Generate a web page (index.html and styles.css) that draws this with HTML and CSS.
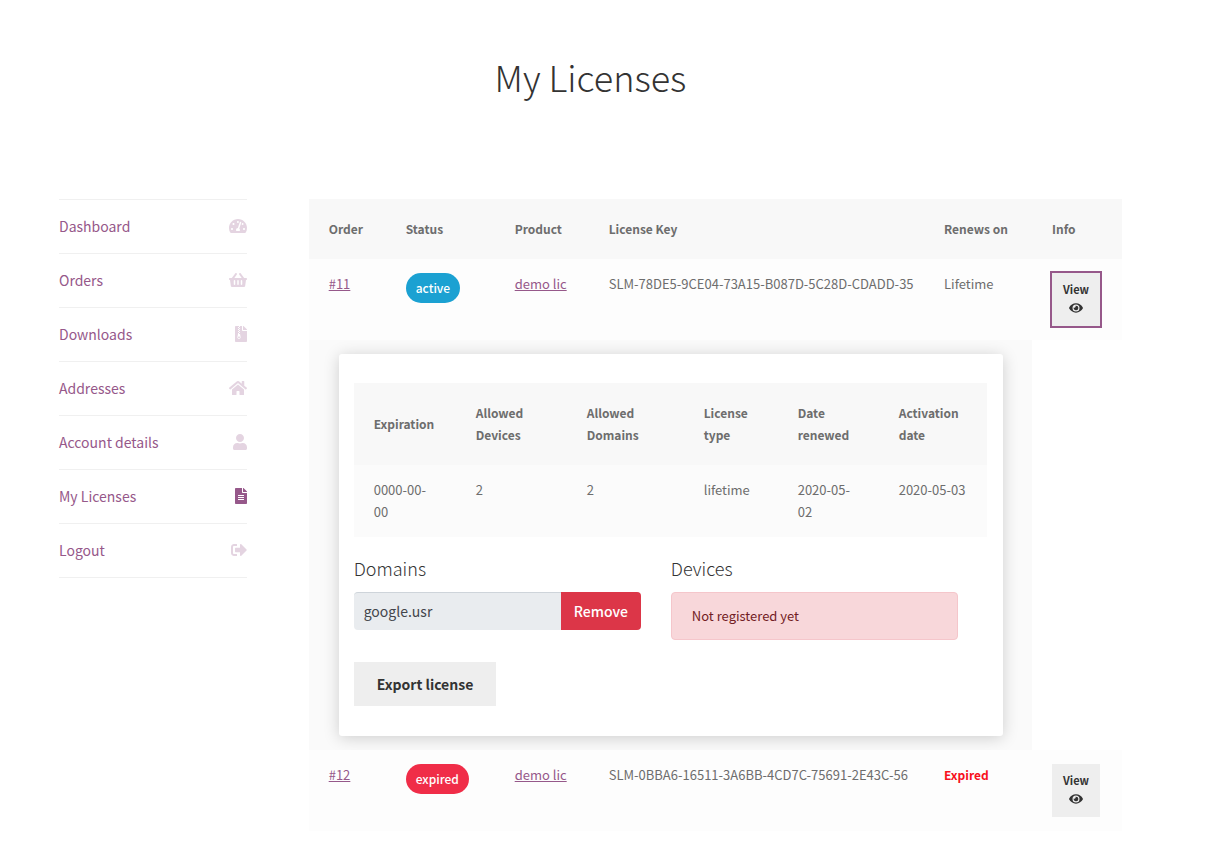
FILE: index.html
```html
<!DOCTYPE html>
<html lang="en">
<head>
<meta charset="utf-8">
<meta name="viewport" content="width=device-width, initial-scale=1">
<title>My Licenses</title>
<link rel="stylesheet" href="styles.css">
</head>
<body>
<svg class="sprite" aria-hidden="true">
  <symbol id="i-eye" viewBox="0 0 576 512"><path d="M572.52 241.4C518.29 135.59 410.93 64 288 64S57.68 135.64 3.48 241.41a32.35 32.35 0 0 0 0 29.19C57.71 376.41 165.07 448 288 448s230.32-71.64 284.52-177.41a32.35 32.35 0 0 0 0-29.19zM288 400a144 144 0 1 1 144-144 143.93 143.93 0 0 1-144 144zm0-240a95.31 95.31 0 0 0-25.31 3.79 47.85 47.85 0 0 1-66.9 66.9A95.78 95.78 0 1 0 288 160z"/></symbol>
</svg>
<div class="page">
  <header class="page-header"><h1>My Licenses</h1></header>
  <div class="layout">
    <nav class="account-nav" aria-label="Account">
      <ul>
        <li><a href="#">Dashboard <svg class="nav-icon" viewBox="0 0 576 512" aria-hidden="true"><path d="M288 32C128.94 32 0 160.94 0 320c0 52.8 14.25 102.26 39.06 144.8 5.61 9.62 16.3 15.2 27.44 15.2h443c11.14 0 21.83-5.58 27.44-15.2C561.75 422.26 576 372.8 576 320c0-159.06-128.94-288-288-288zm0 64c14.71 0 26.58 10.13 30.32 23.65-1.11 2.26-2.64 4.23-3.45 6.67l-9.22 27.67c-5.13 3.49-10.97 6.01-17.64 6.01-17.67 0-32-14.33-32-32S270.33 96 288 96zM96 384c-17.67 0-32-14.33-32-32s14.33-32 32-32 32 14.33 32 32-14.33 32-32 32zm48-160c-17.67 0-32-14.33-32-32s14.33-32 32-32 32 14.33 32 32-14.33 32-32 32zm246.77-72.41l-61.33 184C343.13 347.33 352 364.54 352 384c0 11.72-3.38 22.55-8.88 32H232.88c-5.5-9.45-8.88-20.28-8.88-32 0-33.94 26.5-61.43 59.9-63.59l61.34-184.01c4.17-12.56 17.73-19.45 30.36-15.17 12.57 4.19 19.35 17.79 15.17 30.36zm14.66 57.2l15.52-46.55c3.47-1.29 7.13-2.23 11.05-2.23 17.67 0 32 14.33 32 32s-14.33 32-32 32c-11.38-.01-20.89-6.28-26.57-15.22zM480 384c-17.67 0-32-14.33-32-32s14.33-32 32-32 32 14.33 32 32-14.33 32-32 32z"/></svg></a></li>
        <li><a href="#">Orders <svg class="nav-icon" viewBox="0 0 576 512" aria-hidden="true"><path d="M576 216v16c0 13.255-10.745 24-24 24h-8l-26.113 182.788C514.509 462.435 494.257 480 470.37 480H105.63c-23.887 0-44.139-17.565-47.518-41.212L32 256h-8c-13.255 0-24-10.745-24-24v-16c0-13.255 10.745-24 24-24h67.341l106.78-146.821c10.395-14.292 30.407-17.453 44.701-7.058 14.293 10.395 17.453 30.408 7.058 44.701L170.477 192h235.046L326.12 82.821c-10.395-14.292-7.234-34.306 7.059-44.701 14.291-10.395 34.306-7.235 44.701 7.058L484.659 192H552c13.255 0 24 10.745 24 24zM312 392V280c0-13.255-10.745-24-24-24s-24 10.745-24 24v112c0 13.255 10.745 24 24 24s24-10.745 24-24zm112 0V280c0-13.255-10.745-24-24-24s-24 10.745-24 24v112c0 13.255 10.745 24 24 24s24-10.745 24-24zm-224 0V280c0-13.255-10.745-24-24-24s-24 10.745-24 24v112c0 13.255 10.745 24 24 24s24-10.745 24-24z"/></svg></a></li>
        <li><a href="#">Downloads <svg class="nav-icon" viewBox="0 0 384 512" aria-hidden="true"><path d="M377 105L279.1 7c-4.5-4.5-10.6-7-17-7H256v128h128v-6.1c0-6.3-2.5-12.4-7-16.9zM128.4 336c-17.9 0-32.4 12.1-32.4 27 0 15 14.6 27 32.5 27s32.4-12.1 32.4-27-14.6-27-32.5-27zM224 136V0h-63.6v32h-32V0H24C10.7 0 0 10.7 0 24v464c0 13.3 10.7 24 24 24h336c13.3 0 24-10.7 24-24V160H248c-13.2 0-24-10.8-24-24zM95.9 32h32v32h-32zm32.3 384c-33.2 0-58-30.4-51.4-62.9L96.4 256v-32h32v-32h-32v-32h32v-32h-32V96h32V64h32v32h-32v32h32v32h-32v32h32v32h-32v32h22.1c5.7 0 10.7 4.1 11.8 9.7l17.3 87.7c6.4 32.4-18.4 62.6-51.4 62.6z"/></svg></a></li>
        <li><a href="#">Addresses <svg class="nav-icon" viewBox="0 0 576 512" aria-hidden="true"><path d="M280.37 148.26L96 300.11V464a16 16 0 0 0 16 16l112.06-.29a16 16 0 0 0 15.92-16V368a16 16 0 0 1 16-16h64a16 16 0 0 1 16 16v95.64a16 16 0 0 0 16 16.05L464 480a16 16 0 0 0 16-16V300L295.67 148.26a12.19 12.19 0 0 0-15.3 0zM571.6 251.47L488 182.56V44.05a12 12 0 0 0-12-12h-56a12 12 0 0 0-12 12v72.61L318.47 43a48 48 0 0 0-61 0L4.34 251.47a12 12 0 0 0-1.6 16.9l25.5 31A12 12 0 0 0 45.15 301l235.22-193.74a12.19 12.19 0 0 1 15.3 0L530.9 301a12 12 0 0 0 16.9-1.6l25.5-31a12 12 0 0 0-1.7-16.93z"/></svg></a></li>
        <li><a href="#">Account details <svg class="nav-icon" viewBox="0 0 448 512" aria-hidden="true"><path d="M224 256c70.7 0 128-57.3 128-128S294.7 0 224 0 96 57.3 96 128s57.3 128 128 128zm89.6 32h-16.7c-22.2 10.2-46.9 16-72.9 16s-50.6-5.8-72.9-16h-16.7C60.2 288 0 348.2 0 422.4V464c0 26.5 21.5 48 48 48h352c26.5 0 48-21.5 48-48v-41.6c0-74.2-60.2-134.4-134.4-134.4z"/></svg></a></li>
        <li class="is-active"><a href="#" aria-current="page">My Licenses <svg class="nav-icon" viewBox="0 0 384 512" aria-hidden="true"><path d="M224 136V0H24C10.7 0 0 10.7 0 24v464c0 13.3 10.7 24 24 24h336c13.3 0 24-10.7 24-24V160H248c-13.2 0-24-10.8-24-24zm64 236c0 6.6-5.4 12-12 12H108c-6.6 0-12-5.4-12-12v-8c0-6.6 5.4-12 12-12h168c6.6 0 12 5.4 12 12v8zm0-64c0 6.6-5.4 12-12 12H108c-6.6 0-12-5.4-12-12v-8c0-6.6 5.4-12 12-12h168c6.6 0 12 5.4 12 12v8zm0-72v8c0 6.6-5.4 12-12 12H108c-6.6 0-12-5.4-12-12v-8c0-6.6 5.4-12 12-12h168c6.6 0 12 5.4 12 12zm96-114.1v6.1H256V0h6.1c6.4 0 12.5 2.5 17 7l97.9 98c4.5 4.5 7 10.6 7 16.9z"/></svg></a></li>
        <li><a href="#">Logout <svg class="nav-icon" viewBox="0 0 512 512" aria-hidden="true"><path d="M497 273L329 441c-15 15-41 4.5-41-17v-96H152c-13.3 0-24-10.7-24-24v-96c0-13.3 10.7-24 24-24h136V88c0-21.4 25.9-32 41-17l168 168c9.3 9.4 9.3 24.6 0 34zM192 436v-40c0-6.6-5.4-12-12-12H96c-17.7 0-32-14.3-32-32V160c0-17.7 14.3-32 32-32h84c6.6 0 12-5.4 12-12V76c0-6.6-5.4-12-12-12H96c-53 0-96 43-96 96v192c0 53 43 96 96 96h84c6.6 0 12-5.4 12-12z"/></svg></a></li>
      </ul>
    </nav>
    <main>
      <table class="licenses">
        <colgroup><col class="c-order"><col class="c-status"><col class="c-product"><col class="c-key"><col class="c-renews"><col class="c-info"></colgroup>
        <thead>
          <tr><th>Order</th><th>Status</th><th>Product</th><th>License Key</th><th>Renews on</th><th>Info</th></tr>
        </thead>
        <tbody>
          <tr>
            <td><a href="#">#11</a></td>
            <td><span class="badge badge-active">active</span></td>
            <td><a href="#">demo lic</a></td>
            <td>SLM-78DE5-9CE04-73A15-B087D-5C28D-CDADD-35</td>
            <td>Lifetime</td>
            <td><button type="button" class="view is-focused">View <svg class="eye" aria-hidden="true"><use href="#i-eye"/></svg></button></td>
          </tr>
          <tr>
            <td colspan="5" class="details">
              <div class="card">
                <table class="summary">
                  <colgroup><col class="s-expiration"><col class="s-devices"><col class="s-domains"><col class="s-type"><col class="s-renewed"><col class="s-activation"></colgroup>
                  <thead>
                    <tr><th>Expiration</th><th>Allowed Devices</th><th>Allowed Domains</th><th>License type</th><th>Date renewed</th><th>Activation date</th></tr>
                  </thead>
                  <tbody>
                    <tr><td>0000-00-<wbr>00</td><td>2</td><td>2</td><td>lifetime</td><td>2020-05-<wbr>02</td><td>2020-05-03</td></tr>
                  </tbody>
                </table>
                <div class="registrations">
                  <section>
                    <h2 id="domains-title">Domains</h2>
                    <div class="domain">
                      <input type="text" value="google.usr" readonly aria-labelledby="domains-title">
                      <button type="button" class="remove">Remove</button>
                    </div>
                  </section>
                  <section>
                    <h2>Devices</h2>
                    <div class="alert">Not registered yet</div>
                  </section>
                </div>
                <button type="button" class="export">Export license</button>
              </div>
            </td>
          </tr>
          <tr>
            <td><a href="#">#12</a></td>
            <td><span class="badge badge-expired">expired</span></td>
            <td><a href="#">demo lic</a></td>
            <td>SLM-0BBA6-16511-3A6BB-4CD7C-75691-2E43C-56</td>
            <td><strong class="expired">Expired</strong></td>
            <td><button type="button" class="view">View <svg class="eye" aria-hidden="true"><use href="#i-eye"/></svg></button></td>
          </tr>
        </tbody>
      </table>
    </main>
  </div>
</div>
</body>
</html>
```
FILE: styles.css
```css
*, *::before, *::after { box-sizing: border-box; }

body {
  margin: 0;
  background: #fff;
  color: #6d6d6d;
  font-family: "Noto Sans CJK SC", "Noto Sans", sans-serif;
  font-size: 14px;
  line-height: 25px;
}

button, input { font: inherit; }
a { color: #96588a; }
.sprite { display: none; }

.page { padding: 41px 90px 16px 59px; }

.page-header { margin-bottom: 88px; text-align: center; }
h1 {
  margin: 0;
  color: #333;
  font-size: 36px;
  font-weight: 300;
  line-height: 70px;
}

.layout {
  display: grid;
  grid-template-columns: 3fr 13fr;
  column-gap: 62px;
  align-items: start;
}

.account-nav ul {
  margin: 0;
  padding: 0;
  list-style: none;
  border-top: 1px solid #f0f0f0;
}
.account-nav li { border-bottom: 1px solid #f0f0f0; }
.account-nav a {
  display: flex;
  justify-content: space-between;
  align-items: center;
  padding: 14px 0;
  text-decoration: none;
}
.nav-icon { height: 16px; margin-bottom: 1px; fill: currentColor; opacity: .25; }
.is-active .nav-icon { opacity: 1; }

table {
  width: 100%;
  border-collapse: collapse;
  table-layout: fixed;
  font-size: 13px;
  line-height: 22px;
}
th {
  padding: 19px 20px;
  background: #f8f8f8;
  font-size: 12px;
  font-weight: 700;
  text-align: left;
}
td { padding: 14px 20px; background: #fdfdfd; vertical-align: top; }

.licenses > thead th, .licenses > tbody > tr > td { white-space: nowrap; }
.c-order { width: 77px; }
.c-status { width: 109px; }
.c-product { width: 94px; }
.c-renews { width: 108px; }
.c-info { width: 90px; }

.badge {
  display: block;
  width: fit-content;
  padding: 0 10px;
  border-radius: 15px;
  color: #fff;
  font-size: 12px;
  font-weight: 500;
  line-height: 30px;
}
.badge-active { background: #1ba1d2; }
.badge-expired { background: #f02d48; }
.expired { color: #f8101c; font-size: 12px; font-weight: 700; }

.view {
  display: flex;
  flex-direction: column;
  align-items: center;
  width: 48px;
  padding: 7px 0 9px;
  border: 0;
  background: #eee;
  color: #333;
  font-size: 11px;
  font-weight: 700;
  line-height: 19px;
}
.view.is-focused { outline: 2px solid #96588a; }
.eye { width: 14px; height: 18px; fill: currentColor; }

.licenses > tbody > tr > .details {
  padding: 14px 29px 14px 30px;
  background: #fafafa;
  white-space: normal;
}
.card {
  padding: 29px 16px 30px 15px;
  border-radius: 3px;
  background: #fff;
  box-shadow: 0 2px 16px rgba(0, 0, 0, .18);
}

.s-expiration { width: 102px; }
.s-devices { width: 111px; }
.s-domains { width: 117px; }
.s-type { width: 94px; }
.s-renewed { width: 101px; }
.summary td { background: #fbfbfb; }
.summary td:last-child { padding-right: 16px; }

.registrations {
  display: grid;
  grid-template-columns: 1fr 1fr;
  column-gap: 30px;
  padding: 19px 29px 22px 0;
}
h2 {
  margin: 0 0 11px;
  color: #333;
  font-size: 18px;
  font-weight: 300;
  line-height: 25px;
}
.domain { display: flex; height: 38px; font-size: 14px; }
.domain input {
  flex: 1;
  min-width: 0;
  padding: 0 10px 2px;
  border: 0;
  border-top: 1px solid #ced4da;
  border-radius: 4px 0 0 4px;
  background: #e9ecef;
  color: #43454b;
}
.remove {
  width: 80px;
  padding: 0;
  border: 0;
  border-radius: 0 4px 4px 0;
  background: #dc3648;
  color: #fff;
  font-weight: 500;
}
.alert {
  padding: 12px 20px;
  border: 1px solid #f5c6cb;
  border-radius: 4px;
  background: #f8d7da;
  color: #721c24;
}
.export {
  display: block;
  padding: 0 23px;
  border: 0;
  background: #eee;
  color: #333;
  font-size: 14px;
  font-weight: 700;
  line-height: 44px;
}
```
